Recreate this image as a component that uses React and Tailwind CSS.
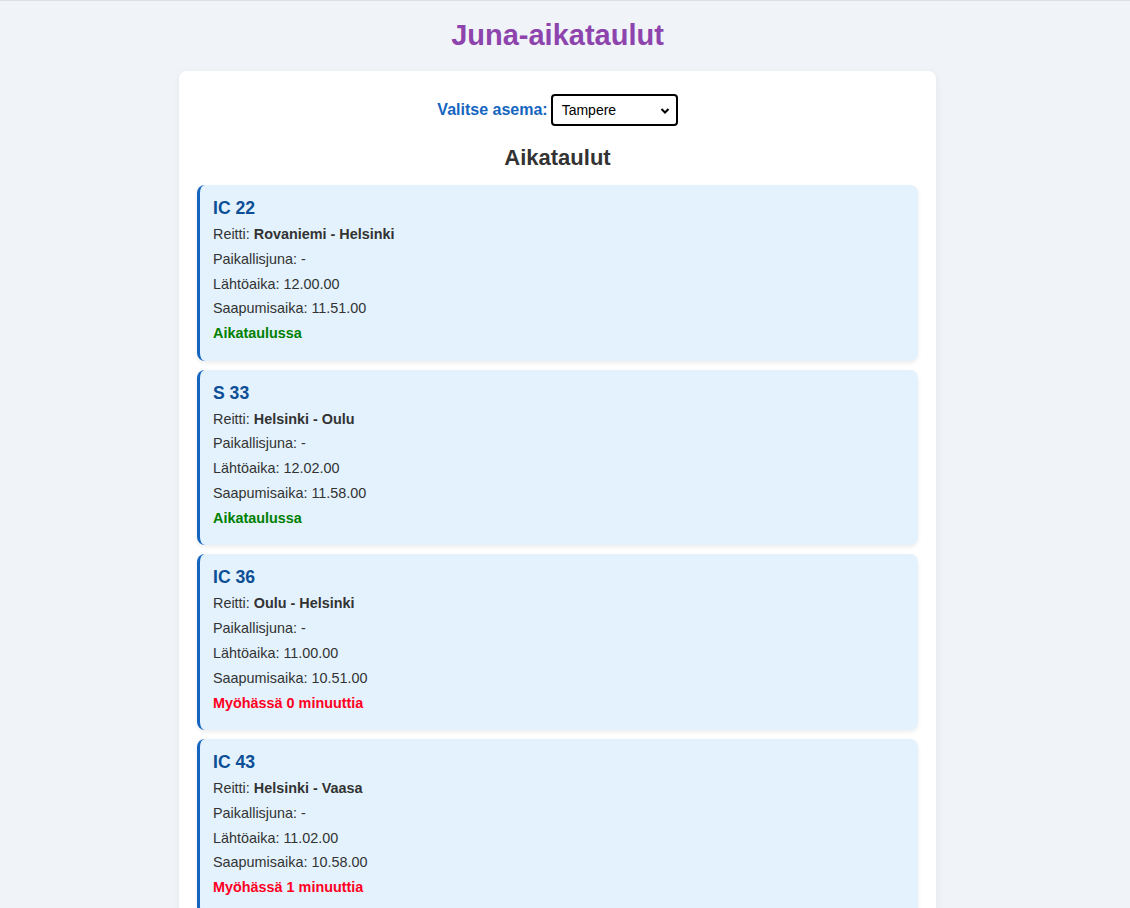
const trains = [
    { id: 'IC 22', route: 'Rovaniemi - Helsinki', local: '-', dep: '12.00.00', arr: '11.51.00', late: null },
    { id: 'S 33', route: 'Helsinki - Oulu', local: '-', dep: '12.02.00', arr: '11.58.00', late: null },
    { id: 'IC 36', route: 'Oulu - Helsinki', local: '-', dep: '11.00.00', arr: '10.51.00', late: 0 },
    { id: 'IC 43', route: 'Helsinki - Vaasa', local: '-', dep: '11.02.00', arr: '10.58.00', late: 1 },
];

function TrainCard({ train }) {
    return (
        <div className="bg-[#e3f2fd] border-l-[3px] border-[#1565c0] rounded-lg shadow-[0_2px_4px_rgba(0,0,0,0.08)] pl-[13px] pr-3 pt-[13px] pb-[19px]">
            <h3 className="text-[17.6px] leading-[20px] font-bold text-[#0d4f96] mb-[8px]">{train.id}</h3>
            <div className="text-[14.4px] leading-[16.5px] text-[#333] flex flex-col gap-[8.3px]">
                <p>Reitti: <span className="font-bold">{train.route}</span></p>
                <p>Paikallisjuna: {train.local}</p>
                <p>Lähtöaika: {train.dep}</p>
                <p>Saapumisaika: {train.arr}</p>
                {train.late === null ? (
                    <p className="font-bold text-[#008000]">Aikataulussa</p>
                ) : (
                    <p className="font-bold text-[#ff0022]">Myöhässä {train.late} minuuttia</p>
                )}
            </div>
        </div>
    );
}

export default function App() {
    return (
        <div className="min-h-[908px] bg-[#f0f4f8] border-t border-[#dcdfe3] pr-[15px] [font-family:'Liberation_Sans',Arial,sans-serif]">
            <h1 className="text-center text-[29px] leading-[37px] font-bold text-[#8e44ad] pt-[16px] pb-[17px]">Juna-aikataulut</h1>

            <div className="mx-auto w-[757px] bg-white rounded-lg shadow-[0_2px_8px_rgba(0,0,0,0.06)] px-[18px] pt-[23px] pb-[18px]">
                <div className="flex items-center justify-center gap-[3px]">
                    <label className="text-[16px] font-bold text-[#1565c0]">Valitse asema:</label>
                    <div className="relative w-[127px] h-[32px] border-2 border-black rounded-[4px] bg-white flex items-center pl-[9px]">
                        <span className="text-[14px] text-black">Tampere</span>
                        <svg className="absolute right-[6px] top-[11px]" width="10" height="8" viewBox="0 0 10 8">
                            <path d="M1.5 2 L5 5.5 L8.5 2" fill="none" stroke="#000" strokeWidth="2" />
                        </svg>
                    </div>
                </div>

                <h2 className="text-center text-[22px] leading-[25px] font-bold text-[#333] mt-[19px] mb-[15px]">Aikataulut</h2>

                <div className="flex flex-col gap-[9px]">
                    {trains.map((t) => (
                        <TrainCard key={t.id} train={t} />
                    ))}
                </div>
            </div>
        </div>
    );
}
